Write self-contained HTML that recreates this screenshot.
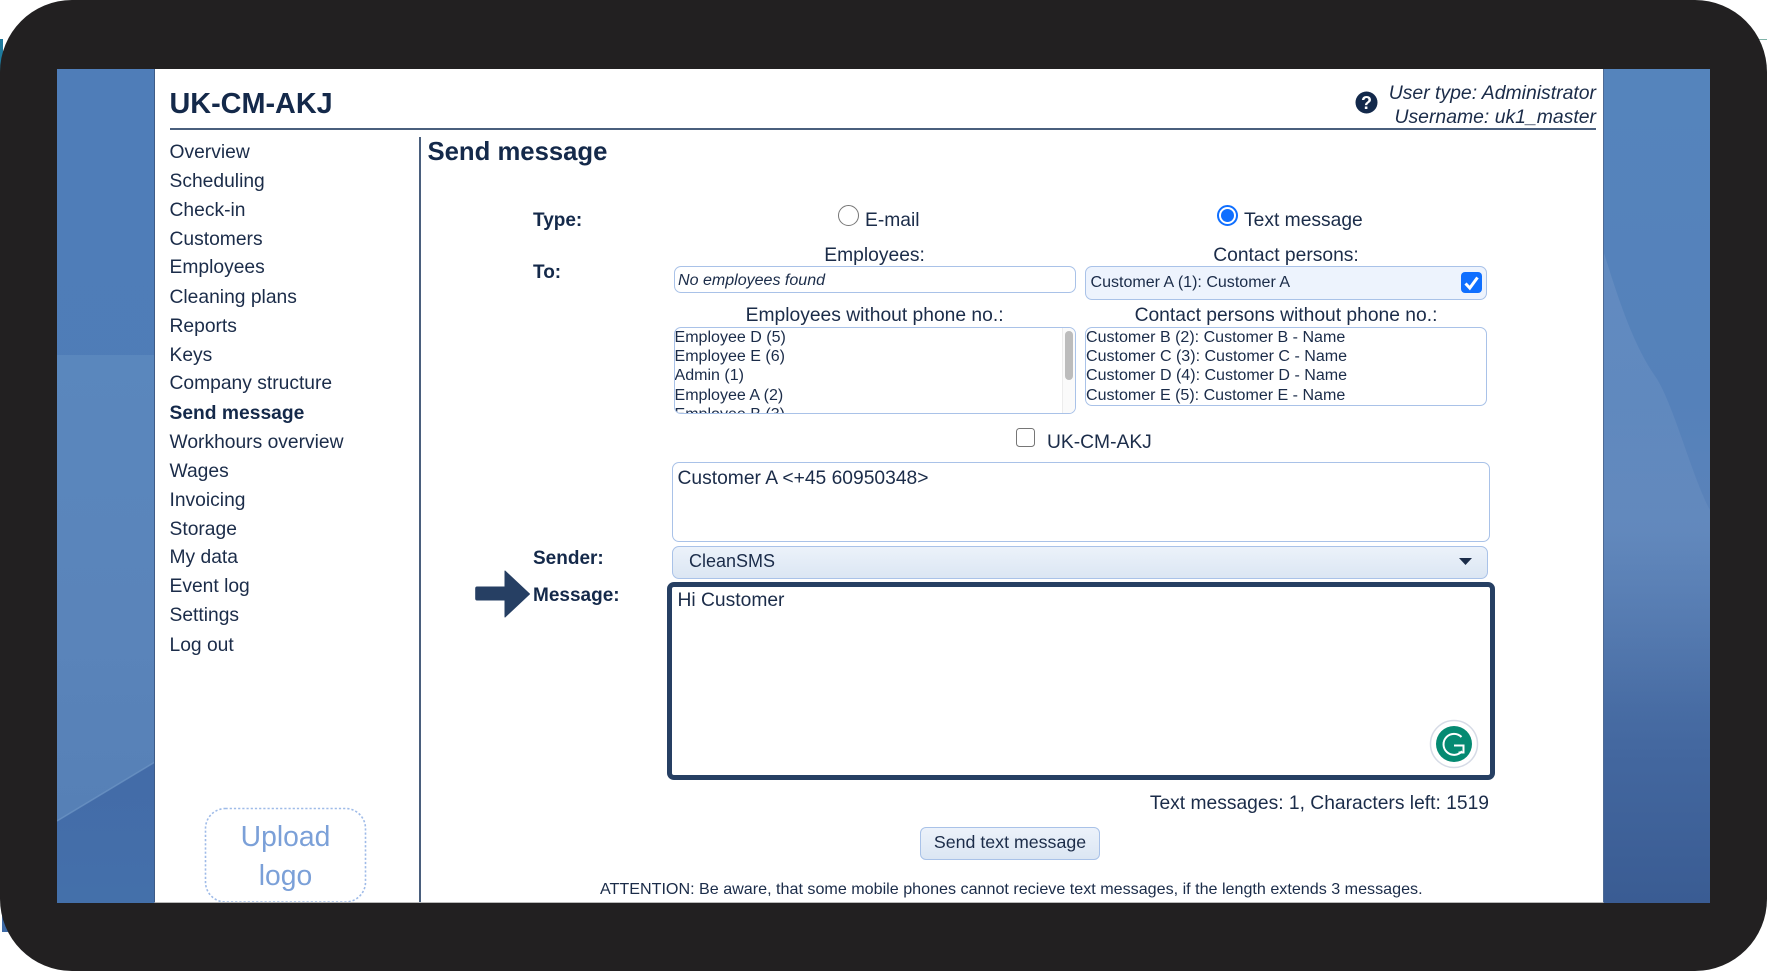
<!DOCTYPE html>
<html><head><meta charset="utf-8"><title>Send message</title>
<style>
html,body{margin:0;padding:0;background:#fff}
#p{position:relative;width:1767px;height:971px;overflow:hidden;background:#fff;font-family:"Liberation Sans",Arial,sans-serif;color:#1b2c49}
#p div,#p span.a{position:absolute;box-sizing:border-box}
.t{white-space:nowrap;line-height:24px;height:24px;font-size:19.25px}
.c{transform:translateX(-50%)}
.r{transform:translateX(-100%)}
.b{font-weight:bold;color:#14294a;font-size:19px}
.n{left:169.5px}
.l{white-space:nowrap;font-size:16.05px;line-height:19.3px;height:19.3px}
.box{border:1.5px solid #a9c2e8;border-radius:7px;background:#fff}
</style></head><body><div id="p">
<div style="left:0;top:39px;width:3px;height:200px;background:#1f7a9c"></div>
<div style="left:2px;top:880px;width:6px;height:52px;background:#3e6aa6"></div>
<div style="left:1740px;top:39px;width:27px;height:1px;background:#7fb3a8"></div>
<div style="left:0;top:0;width:1767px;height:971px;background:#222021;border-radius:72px"></div>

<svg style="position:absolute;left:57px;top:69px" width="1653" height="834" viewBox="0 0 1653 834">
<defs>
<linearGradient id="lg" x1="0" y1="0" x2="0" y2="1"><stop offset="0" stop-color="#4f7db8"/><stop offset="1" stop-color="#4f7cb6"/></linearGradient>
<linearGradient id="lm" x1="0" y1="0" x2="0" y2="1"><stop offset="0" stop-color="#5a87bd"/><stop offset=".6" stop-color="#5a84ba"/><stop offset="1" stop-color="#5680b6"/></linearGradient>
<linearGradient id="ll" x1="0" y1="0" x2="0" y2="1"><stop offset="0" stop-color="#436ba8"/><stop offset="1" stop-color="#4470aa"/></linearGradient>
<linearGradient id="rg" x1="0" y1="0" x2="0" y2="1"><stop offset="0" stop-color="#5584bc"/><stop offset=".4" stop-color="#5581ba"/><stop offset=".55" stop-color="#5b83b9"/><stop offset=".72" stop-color="#4c71a8"/><stop offset=".82" stop-color="#43679f"/><stop offset="1" stop-color="#3a5c93"/></linearGradient>
<linearGradient id="ov" x1="0" y1="180" x2="0" y2="640" gradientUnits="userSpaceOnUse"><stop offset="0" stop-color="#7a9bc9" stop-opacity=".36"/><stop offset=".55" stop-color="#7a9bc9" stop-opacity=".26"/><stop offset="1" stop-color="#7a9bc9" stop-opacity="0"/></linearGradient>
</defs>
<rect x="0" y="0" width="98" height="834" fill="url(#lg)"/>
<polygon points="0,286 98,286 98,693 0,752" fill="url(#lm)"/>
<polygon points="0,752 98,693 98,834 0,834" fill="url(#ll)"/>
<path d="M0 752L98 693" stroke="#6f97c6" stroke-width="1.5" opacity=".7"/>
<rect x="1545" y="0" width="108" height="834" fill="url(#rg)"/>
<path d="M1546 181C1560 225 1575 275 1600 310C1618 340 1636 410 1653 441L1653 640L1546 640Z" fill="url(#ov)"/>
</svg>
<div style="left:153.5px;top:69px;width:1450px;height:833.5px;background:#fff;border-left:1.5px solid #3e5b86;border-right:1.5px solid #4d6a94;border-bottom:1px solid #b9b9b9"></div>

<div class="t b" style="left:169.5px;top:87px;font-size:28.8px;line-height:34px;height:34px">UK-CM-AKJ</div>
<div style="left:169.5px;top:128px;width:1426px;height:1.5px;background:#4a5f7d"></div>
<svg style="position:absolute;left:1355px;top:91px" width="23" height="23" viewBox="0 0 23 23"><circle cx="11.5" cy="11.5" r="11" fill="#13294b"/><text x="11.5" y="18" text-anchor="middle" font-family="Liberation Sans" font-weight="bold" font-size="18" fill="#fff">?</text></svg>
<div class="t r" style="left:1596px;top:81px;font-style:italic;font-size:19.4px">User type: Administrator</div>
<div class="t r" style="left:1596px;top:105px;font-style:italic;font-size:19.4px">Username: uk1_master</div>

<div class="t n" style="top:140.5px">Overview</div>
<div class="t n" style="top:169.5px">Scheduling</div>
<div class="t n" style="top:198.5px">Check-in</div>
<div class="t n" style="top:227.5px">Customers</div>
<div class="t n" style="top:256px">Employees</div>
<div class="t n" style="top:285.5px">Cleaning plans</div>
<div class="t n" style="top:314.5px">Reports</div>
<div class="t n" style="top:343.5px">Keys</div>
<div class="t n" style="top:372px">Company structure</div>
<div class="t n" style="top:401.5px;font-weight:bold;color:#14294a">Send message</div>
<div class="t n" style="top:430.5px">Workhours overview</div>
<div class="t n" style="top:459.5px">Wages</div>
<div class="t n" style="top:488.5px">Invoicing</div>
<div class="t n" style="top:517.5px">Storage</div>
<div class="t n" style="top:546px">My data</div>
<div class="t n" style="top:575px">Event log</div>
<div class="t n" style="top:604px">Settings</div>
<div class="t n" style="top:633.5px">Log out</div>

<div style="left:204px;top:807px;width:164px;height:95px;overflow:hidden">
<svg style="position:absolute;left:0;top:0" width="164" height="100" viewBox="0 0 164 100"><rect x="1.5" y="1.5" width="160" height="93.5" rx="20" fill="none" stroke="#9fbbe8" stroke-width="1.6" stroke-dasharray="2.2 2"/></svg>
</div>
<div class="t c" style="left:285.5px;top:819px;font-size:28.3px;line-height:34px;height:34px;color:#7ba0d8">Upload</div>
<div class="t c" style="left:285.5px;top:858px;font-size:28.3px;line-height:34px;height:34px;color:#7ba0d8">logo</div>

<div style="left:419px;top:137px;width:1.5px;height:765px;background:#4a5f7d"></div>
<div class="t b" style="left:427.5px;top:137px;font-size:25.7px;line-height:30px;height:30px">Send message</div>

<div class="t b" style="left:533px;top:209px">Type:</div>
<div class="t b" style="left:533px;top:261px">To:</div>
<div style="left:838px;top:204.5px;width:21px;height:21px;border:1.5px solid #767676;border-radius:50%;background:#fff"></div>
<div class="t" style="left:865px;top:209px">E-mail</div>
<div style="left:1217px;top:204.5px;width:21px;height:21px;border:2px solid #0f6fff;border-radius:50%;background:#fff"></div>
<div style="left:1221px;top:208.5px;width:13px;height:13px;border-radius:50%;background:#0f6fff"></div>
<div class="t" style="left:1244px;top:209px">Text message</div>

<div class="t c" style="left:874.6px;top:243.5px">Employees:</div>
<div class="t c" style="left:1286px;top:243.5px">Contact persons:</div>
<div class="box" style="left:673.5px;top:265.5px;width:402px;height:27.5px"></div>
<div class="l" style="left:678px;top:270.5px;font-style:italic">No employees found</div>
<div class="box" style="left:1085px;top:265.5px;width:402px;height:34px;background:#edf3fd"></div>
<div class="l" style="left:1090.5px;top:273px">Customer A (1): Customer A</div>
<div style="left:1460.5px;top:271.5px;width:21px;height:21.5px;background:#0f6fff;border-radius:4px"></div>
<svg style="position:absolute;left:1460.5px;top:271.5px" width="21" height="21.5" viewBox="0 0 21 21.5"><path d="M4.5 11.5L8.8 16L16.5 5.5" fill="none" stroke="#fff" stroke-width="3"/></svg>

<div class="t c" style="left:874.6px;top:304px">Employees without phone no.:</div>
<div class="t c" style="left:1286px;top:304px">Contact persons without phone no.:</div>
<div class="box" style="left:673.5px;top:326.5px;width:402px;height:87px;overflow:hidden">
  <div class="l" style="left:0;top:0">Employee D (5)</div>
  <div class="l" style="left:0;top:19.3px">Employee E (6)</div>
  <div class="l" style="left:0;top:38.6px">Admin (1)</div>
  <div class="l" style="left:0;top:58.2px">Employee A (2)</div>
  <div class="l" style="left:0;top:77.2px">Employee B (3)</div>
  <div style="left:387px;top:0;width:14px;height:85px;background:#fafafa;border-left:1px solid #ececec"></div>
  <div style="left:390.5px;top:3px;width:7.5px;height:49px;background:#bcbcbc;border-radius:4px"></div>
</div>
<div class="box" style="left:1085px;top:326.5px;width:402px;height:79px;overflow:hidden">
  <div class="l" style="left:0;top:0">Customer B (2): Customer B - Name</div>
  <div class="l" style="left:0;top:19.3px">Customer C (3): Customer C - Name</div>
  <div class="l" style="left:0;top:38.6px">Customer D (4): Customer D - Name</div>
  <div class="l" style="left:0;top:58.2px">Customer E (5): Customer E - Name</div>
</div>

<div style="left:1016px;top:427.5px;width:19px;height:19px;border:1.5px solid #767676;border-radius:3.5px;background:#fff"></div>
<div class="t" style="left:1047px;top:430.5px">UK-CM-AKJ</div>

<div class="box" style="left:672px;top:462px;width:818px;height:79.5px"></div>
<div class="t" style="left:677.5px;top:467px">Customer A &lt;+45 60950348&gt;</div>

<div class="t b" style="left:533px;top:546.5px">Sender:</div>
<div class="box" style="left:672px;top:546px;width:816px;height:33px;background:linear-gradient(180deg,#ecf2fa,#dbe6f3)"></div>
<div class="t" style="left:689px;top:549px;font-size:18px">CleanSMS</div>
<svg style="position:absolute;left:1459px;top:558px" width="13" height="8" viewBox="0 0 13 8"><path d="M0 0H13L6.5 7Z" fill="#1b2c49"/></svg>

<svg style="position:absolute;left:474px;top:568px" width="58" height="52" viewBox="0 0 58 52"><path d="M3 19H31V3L55.5 26L31 49V32H3Q1.7 32 1.7 30.5V20.5Q1.7 19 3 19Z" fill="#263f63" stroke="#263f63" stroke-width="1" stroke-linejoin="round"/></svg>
<div class="t b" style="left:533px;top:583.5px">Message:</div>
<div style="left:667px;top:581.5px;width:827.5px;height:198px;border:5px solid #263f63;border-radius:7px;background:#fff"></div>
<div class="t" style="left:677.5px;top:589px">Hi Customer</div>
<svg style="position:absolute;left:1429px;top:719px" width="50" height="50" viewBox="0 0 50 50">
<circle cx="25" cy="25" r="23.5" fill="#fff" stroke="#d6dbe6" stroke-width="1.5"/>
<circle cx="25" cy="25" r="18" fill="#058a72"/>
<path d="M32.5 18A10.5 10.5 0 1 0 33 32.2" fill="none" stroke="#fff" stroke-width="2"/>
<path d="M25 26.5H34.5V33.5M29.5 33.5H35.5" fill="none" stroke="#fff" stroke-width="2"/>
</svg>

<div class="t r" style="left:1489px;top:791.5px">Text messages: 1, Characters left: 1519</div>
<div style="left:920px;top:827px;width:180px;height:33px;border:1.5px solid #a9c2e8;border-radius:6px;background:linear-gradient(180deg,#ecf2fa,#dbe6f3)"></div>
<div class="t c" style="left:1010px;top:830px;font-size:17.8px">Send text message</div>
<div class="t" style="left:600px;top:877px;font-size:16.12px">ATTENTION: Be aware, that some mobile phones cannot recieve text messages, if the length extends 3 messages.</div>
</div></body></html>
